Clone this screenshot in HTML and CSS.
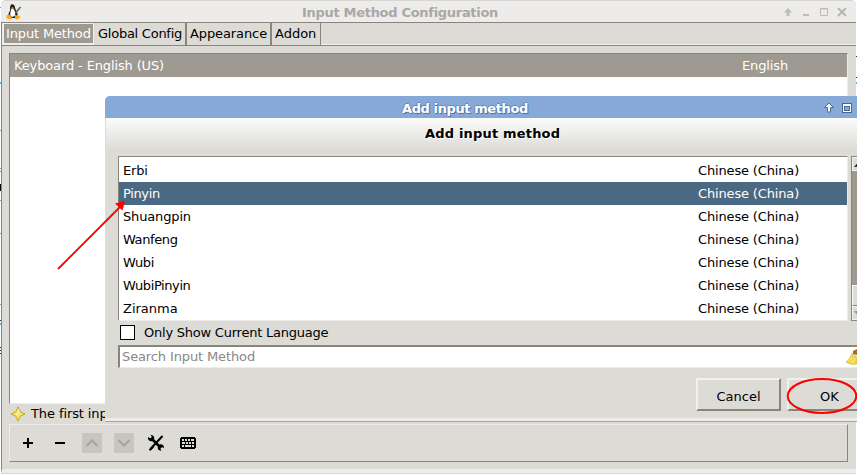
FILE: index.html
```html
<!DOCTYPE html>
<html lang="en">
<head>
<meta charset="utf-8">
<title>Input Method Configuration</title>
<link rel="stylesheet" href="styles.css">
</head>
<body>
<main class="desktop">
  <svg class="backdrop" width="857" height="474" shape-rendering="crispEdges">
    <path d="M0 7.500h1M0 130.500h1M0 168.500h1M0 171.500h1M0 200.500h1M0 233.500h1M0 304.500h1" stroke="#999"/>
    <path d="M0 82.500h1M0 323.500h1M856 82.500h1" stroke="#58b8ef" stroke-width="2"/>
    <path d="M0 187.500h1" stroke="#000" stroke-width="7"/>
    <path d="M0 320.500h1M0 347.500h1M0 350.500h1M0 353.500h1M856 56.500h1M856 77.500h1" stroke="#333"/>
  </svg>
  <section class="window">
    <header class="titlebar">
      <svg class="app-icon" width="16" height="16" viewBox="0 0 16 16">
        <path d="M5 .5c2-1 4 .4 4 3 0 2 2 3 2.500 6 .5 2-1 4.500-3 4.500H4c-2-1-2-4-.7-6C4.500 6 4 5 4 3z" fill="#222"/>
        <path d="M5 5.500c1-.6 2-.5 3 0 .8 2 1.500 3 1.200 5C9 13 5 13.500 4.300 11.500c-.4-2 .5-4 .7-6z" fill="#fff"/>
        <path d="M5 4l1.500-.8L8 4 6.500 5.300zM.5 11.500l2.500-1 3 3.500-1 1.500-4.500-1zM9 11l2 .5 2.500.5 1 1.500-3 2-2.500-.5z" fill="#ffa81d"/>
        <path d="M9.500 9l5-6" stroke="#686868" stroke-width="1.800"/>
      </svg>
      <h1>Input Method Configuration</h1>
      <svg class="controls" width="66" height="12" viewBox="0 0 66 12">
        <path d="M5 0L.8 4.500h2.700V8h3V4.500h2.700zM20 6h6v2h-6z" fill="#bdbcba"/>
        <path d="M37.500.5h7v7h-7z" fill="none" stroke="#bdbcba"/><path d="M37 1h8" stroke="#bdbcba"/>
        <path d="M55 0l8 8M63 0l-8 8" stroke="#b5b4b2" stroke-width="2"/>
      </svg>
    </header>
    <nav class="tabs">
      <button class="tab active">Input Method</button>
      <button class="tab global">Global Config</button>
      <button class="tab look">Appearance</button>
      <button class="tab addon">Addon</button>
    </nav>
    <div class="content">
      <div class="methods"><div class="method"><span>Keyboard - English (US)</span><span class="lang">English</span></div></div>
      <p class="hint"><svg width="16" height="16" viewBox="0 0 16 16"><path d="M8 .8l2.200 5L15 8l-4.800 2.200L8 15.200l-2.200-5L1 8l4.800-2.200z" fill="#f4e46e" stroke="#c9a51d" stroke-linejoin="round"/><path d="M8 3l1 4-3 2" stroke="#fff9bd" fill="none"/></svg><span>The first inp</span></p>
      <div class="toolbar">
        <svg width="20" height="20" viewBox="0 0 20 20"><path d="M5 10h10M10 5v10" stroke="#000" stroke-width="2"/></svg>
        <svg width="20" height="20" viewBox="0 0 20 20"><path d="M5 10h10" stroke="#000" stroke-width="2"/></svg>
        <svg class="disabled" width="20" height="20" viewBox="0 0 20 20"><path d="M4.500 13L10 7.500l5.500 5.500" fill="none" stroke="#a7a39c" stroke-width="2"/></svg>
        <svg class="disabled" width="20" height="20" viewBox="0 0 20 20"><path d="M4.500 7L10 12.500 15.500 7" fill="none" stroke="#a7a39c" stroke-width="2"/></svg>
        <svg width="20" height="20" viewBox="0 0 20 20"><path d="M5 5l10 10" stroke="#000" stroke-width="2.600"/><path d="M16.500 3L10 10l-5.500 6" stroke="#000" stroke-width="2"/><path d="M2 4l2.500 1.500L6 4 4.500 2C7 1.500 9 4 8 6.500L6.500 8C4 9 1.500 7 2 4zM12 13.500l1.500-2c2-1 5 .7 4.500 3.500L15.500 14 14 15.500l1.500 2c-2 .8-4.500-1.500-3.500-4z"/><path d="M6.800 12.500l-4 4 1.500 1.500 4-4z"/></svg>
        <svg width="20" height="20" viewBox="0 0 20 20" shape-rendering="crispEdges"><path d="M3 4h14v1h1v10h-1v1H3v-1H2V5h1z"/><path d="M4 6h2v2H4zM7 6h2v2H7zM10 6h2v2h-2zM13 6h3v2h-3zM4 9h3v2H4zM8 9h2v2H8zM11 9h2v2h-2zM14 9h2v2h-2zM4 12h2v2H4zM7 12h6v2H7zM14 12h2v2h-2z" fill="#dcdbd6"/></svg>
      </div>
    </div>
  </section>

  <section class="dialog">
    <header class="dialog-title">
      <h2>Add input method</h2>
      <svg class="dialog-controls" width="30" height="12" viewBox="0 0 30 12">
        <path d="M6 1L1.500 5.500h3V10h3V5.500h3z" fill="#fff" stroke="#4d7198"/>
        <path d="M19 1h10v10H19z" fill="#47678c"/><path d="M20 2h8v8h-8z" fill="#fff"/><path d="M21 4h6v5h-6z" fill="#47678c"/><path d="M22 5h4v3h-4z" fill="#86a9d7"/>
      </svg>
    </header>
    <div class="dialog-body">
      <h3>Add input method</h3>
      <div class="picker">
        <ul class="choices">
          <li><span>Erbi</span><span>Chinese (China)</span></li>
          <li class="selected"><span>Pinyin</span><span>Chinese (China)</span></li>
          <li><span>Shuangpin</span><span>Chinese (China)</span></li>
          <li class="tight"><span>Wanfeng</span><span>Chinese (China)</span></li>
          <li class="tight"><span>Wubi</span><span>Chinese (China)</span></li>
          <li class="tight"><span>WubiPinyin</span><span>Chinese (China)</span></li>
          <li class="wide"><span>Ziranma</span><span>Chinese (China)</span></li>
        </ul>
        <div class="scrollbar"><i class="arrow up"></i><i class="track"></i><i class="thumb"></i><i class="arrow down"></i></div>
      </div>
      <label class="filter"><i class="checkbox"></i><span>Only Show Current Language</span></label>
      <div class="search"><span>Search Input Method</span><svg width="12" height="18" viewBox="0 0 12 18"><path d="M8 3l4-2v6l-4-1z" fill="#a66a2c"/><path d="M7 5l5 4v7c-4 1-8-.3-11-2 3-2 5-5 6-9z" fill="#f3d744" stroke="#ceb02c" stroke-width=".6"/><path d="M6 7l6 3" stroke="#e2c6ad" stroke-width="1.500"/><path d="M4 13l3-3M7 15l3-4" stroke="#fff19c"/></svg></div>
      <footer class="actions"><button class="button cancel">Cancel</button><button class="button ok">OK</button></footer>
    </div>
  </section>
  <svg class="annotations" width="857" height="474" viewBox="0 0 857 474">
    <path d="M58 269L121 206" stroke="#f00" stroke-width="1.800"/><path d="M125 201l-10 2.500 7.500 7z" fill="#f00"/>
    <ellipse cx="822" cy="396" rx="34.300" ry="17" fill="none" stroke="#f00" stroke-width="2"/>
  </svg>
</main>
</body>
</html>
```
FILE: styles.css
```css
* { box-sizing: border-box; }
body { margin: 0; width: 857px; height: 474px; overflow: hidden; background: #fff; font: 13px/16px "DejaVu Sans", sans-serif; color: #000; }
h1, h2, h3, p, ul { margin: 0; padding: 0; }
h1, h2, h3 { font-size: 13px; line-height: 16px; }
button { font: inherit; color: inherit; border: 0; padding: 0; margin: 0; background: none; }
svg { flex: none; }
.desktop { position: relative; width: 857px; height: 474px; overflow: hidden; }
.backdrop { position: absolute; left: 0; top: 0; }
.window { position: absolute; left: 1px; top: 0; width: 855px; height: 474px; background: #dcdbd6; border-top: 1px solid #d5d5d4; border-bottom: 1px solid #d8d7d4; border-radius: 5px 5px 0 0; display: flex; flex-direction: column; }
.titlebar { height: 21px; flex: none; display: flex; align-items: center; background: #edecea; border-radius: 5px 5px 0 0; }
.app-icon { margin: 0 0 0 5px; }
.titlebar h1 { margin-left: 280px; width: 459px; color: #a9a8a6; white-space: nowrap; margin-top: 3px; letter-spacing: -.3px; }
.controls { margin-left: 22px; margin-top: 5px; }
.tabs { display: flex; height: 24px; flex: none; border: 1px solid #88857d; border-right: 0; box-shadow: inset 0 -1px #f0efec; }
.tab { height: 22px; display: flex; align-items: center; padding-left: 2px; background: #dcdbd6; border-right: 1px solid #88857d; white-space: nowrap; }
.tab.active { width: 92px; height: 21px; background: #9e9a91; color: #fff; border: 2px solid #efeeeb; border-width: 1px 1px 1px 2px; box-shadow: 1px 0 #88857d; padding-left: 2px; letter-spacing: -.15px; }
.global { width: 92px; padding-left: 4px; letter-spacing: -.25px; }
.look { width: 85px; border-left: 1px solid #88857d; letter-spacing: -.1px; padding-left: 3px; }
.addon { width: 50px; border-left: 1px solid #88857d; padding-left: 3px; }
.content { flex: 1; border-left: 1px solid #88857d; border-bottom: 4px solid #edecea; padding: 7px 7px 0; }
.methods { width: 839px; height: 351px; border: 1px solid #88857d; border-right-color: #edecea; border-bottom-color: #edecea; background: #fff; }
.method { height: 23px; background: #9e9a91; color: #fff; display: flex; align-items: center; padding-left: 4px; letter-spacing: -.13px; }
.method .lang { margin-left: auto; width: 105px; }
.hint { display: flex; align-items: center; height: 18px; padding-left: 1px; margin-top: 1px; white-space: nowrap; }
.hint span { margin-left: 5px; letter-spacing: -.1px; }
.toolbar { width: 839px; height: 38px; margin-top: 1px; border: 1px solid #edecea; border-right-color: #88857d; border-bottom-color: #88857d; display: flex; align-items: center; gap: 12px; padding-left: 8px; }
.disabled { background: #c8c5bf; }
.dialog { position: absolute; left: 105px; top: 96px; width: 770px; height: 326px; background: #dcdbd6; border-left: 1px solid #dcdbd6; border-bottom: 1px solid #86a9d7; border-radius: 5px 0 0; }
.dialog-title { height: 22px; margin-left: -1px; background: #86a9d7; border-radius: 5px 0 0; display: flex; align-items: center; }
.dialog-title h2 { width: 422px; margin-left: 297px; margin-top: 3px; color: #fff; letter-spacing: -.4px; text-shadow: 1px 1px #4e75a5, -1px 0 #648bbb, 0 -1px #648bbb; }
.dialog-controls { margin-top: 2px; margin-left: -1px; }
.dialog-body { height: 303px; padding: 8px 0 0 12px; border-bottom: 3px solid #edecea; background: linear-gradient(#fcfcfb, #dcdbd6 32px); }
.dialog-body h3 { padding-left: 307px; height: 30px; letter-spacing: .18px; text-shadow: 1px 1px #fff; }
.picker { display: flex; }
.choices { list-style: none; width: 730px; height: 165px; background: #fff; border: 1px solid #88857d; border-right-color: #edecea; border-bottom-color: #edecea; padding-top: 2px; overflow: hidden; }
.choices li { height: 23px; display: flex; align-items: center; padding-left: 4px; white-space: nowrap; letter-spacing: -.15px; }
.choices li span:first-child { width: 575px; }
.choices .tight span:first-child { letter-spacing: -.4px; }
.choices .wide span:first-child { letter-spacing: 0; }
.choices .selected { background: #4b6983; color: #fff; }
.choices .selected span:first-child { letter-spacing: -.35px; }
.scrollbar { width: 16px; height: 165px; margin-left: 3px; border: 1px solid #88857d; background: #9e9a91; display: flex; flex-direction: column; }
.arrow { height: 14px; flex: none; background: #dcdbd6; border: 1px solid #f3f2f0; position: relative; }
.arrow::after { content: ""; position: absolute; left: 1px; top: 4px; border: 4px solid transparent; border-top: 0; border-bottom: 5px solid #333; }
.arrow.down::after { border-top: 5px solid #999; border-bottom: 0; }
.track { flex: 1; }
.thumb { height: 21px; border: 1px solid #fff; border-bottom-color: #88857d; background: #dcdbd6; }
.filter { display: flex; align-items: center; height: 24px; padding-left: 2px; letter-spacing: -.23px; }
.checkbox { width: 15px; height: 15px; background: #fff; border: 1px solid #000; margin: -1px 9px 0 0; }
.search { height: 23px; background: #fff; border: 2px solid #88857d; border-right: 0; border-bottom: 1px solid #edecea; color: #888; display: flex; align-items: center; padding-left: 2px; letter-spacing: -.12px; }
.search span { width: 723px; }
.actions { display: flex; gap: 6px; padding: 10px 0 0 578px; }
.button { height: 33px; width: 85px; flex: none; border: 2px solid #f1f0ed; border-right-color: #88857d; border-bottom-color: #88857d; padding-top: 4px; }
.annotations { position: absolute; left: 0; top: 0; pointer-events: none; }
```
